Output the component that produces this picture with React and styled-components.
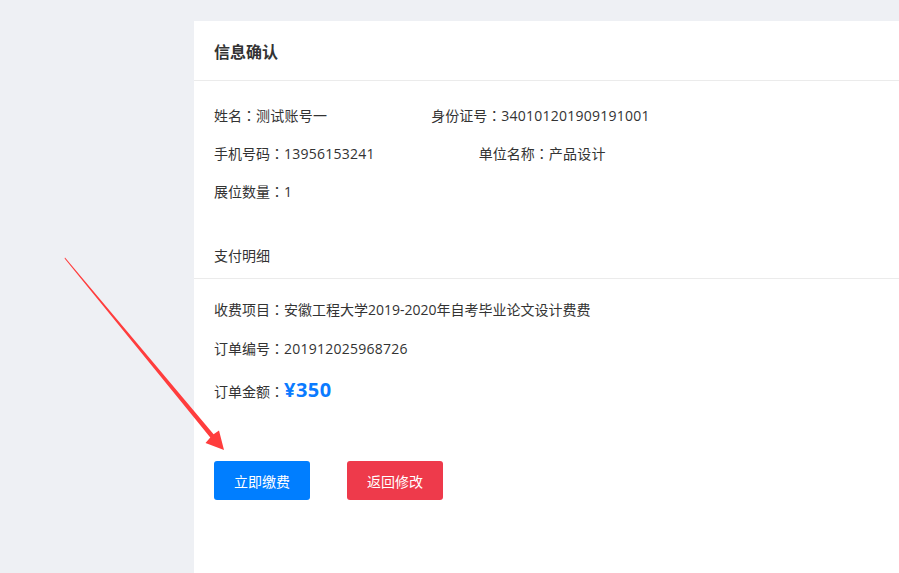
import styled, { createGlobalStyle } from "styled-components";

const GlobalStyle = createGlobalStyle`
  html, body {
    margin: 0;
    padding: 0;
    background: #eef0f4;
  }
  body {
    font-family: "Open Sans", "Noto Sans CJK SC", sans-serif;
    color: #333;
  }
`;

const info = [
  [
    { label: "姓名", value: "测试账号一" },
    { label: "身份证号", value: "340101201909191001" },
  ],
  [
    { label: "手机号码", value: "13956153241" },
    { label: "单位名称", value: "产品设计" },
  ],
  [{ label: "展位数量", value: "1" }],
];

const Colon = () => <ColonMark>：</ColonMark>;

function App() {
  return (
    <Page>
      <GlobalStyle />
      <Panel>
        <Header>信息确认</Header>
        <InfoBlock>
          {info.map((row, i) => (
            <Row key={i}>
              {row.map((item) => (
                <Item key={item.label}>
                  {item.label}
                  <Colon />
                  <Value>{item.value}</Value>
                </Item>
              ))}
            </Row>
          ))}
        </InfoBlock>
        <SubTitle>支付明细</SubTitle>
        <PayBlock>
          <Row>
            收费项目
            <Colon />
            安徽工程大学2019-2020年自考毕业论文设计费费
          </Row>
          <Row>
            订单编号
            <Colon />
            <Value>201912025968726</Value>
          </Row>
          <Row>
            订单金额
            <Colon />
            <Amount>¥350</Amount>
          </Row>
        </PayBlock>
        <Actions>
          <Button $color="#007eff">立即缴费</Button>
          <Button $color="#ee3a4b">返回修改</Button>
        </Actions>
      </Panel>
      <Arrow viewBox="0 0 899 573" width="899" height="573">
        <polygon
          points="65,257.4 213.6,434.3 219,430.5 224,450 205.5,443 210.3,437.6 64.6,258.6"
          fill="#ff3d3d"
        />
      </Arrow>
    </Page>
  );
}

const Page = styled.div`
  position: relative;
  min-height: 100vh;
  padding: 21px 0 0 194px;
  box-sizing: border-box;
  overflow: hidden;
`;

const Panel = styled.div`
  background: #fff;
  min-height: 552px;
  font-size: 14px;
`;

const Header = styled.div`
  height: 59px;
  line-height: 62px;
  padding: 0 20px;
  font-size: 16px;
  font-weight: bold;
  color: #333;
  border-bottom: 1px solid #ebebeb;
`;

const InfoBlock = styled.div`
  padding: 15px 20px 24px;
`;

const Row = styled.div`
  line-height: 38px;
  height: 38px;
  white-space: nowrap;
`;

const Item = styled.span`
  display: inline-block;
  margin-right: 104px;
`;

const Value = styled.span`
  letter-spacing: 0.25px;
`;

const ColonMark = styled.span`
  font-family: "Noto Sans CJK TC", sans-serif;
`;

const SubTitle = styled.div`
  height: 44px;
  line-height: 44px;
  padding: 0 20px;
  border-bottom: 1px solid #ebebeb;
`;

const PayBlock = styled.div`
  padding: 11px 20px 0;
  ${Row} {
    height: 39px;
    line-height: 39px;
  }
  ${Row}:last-child {
    height: 43px;
    line-height: 43px;
  }
`;

const Amount = styled.span`
  font-size: 20px;
  font-weight: bold;
  color: #0a7bff;
  letter-spacing: 0.5px;
`;

const Actions = styled.div`
  display: flex;
  gap: 37px;
  padding: 50px 20px 0;
`;

const Button = styled.button`
  width: 96px;
  height: 39px;
  border: none;
  border-radius: 3px;
  background: ${(p) => p.$color};
  color: #fff;
  font-family: inherit;
  font-size: 14px;
  cursor: pointer;
`;

const Arrow = styled.svg`
  position: absolute;
  top: 0;
  left: 0;
  pointer-events: none;
`;

export default App;
